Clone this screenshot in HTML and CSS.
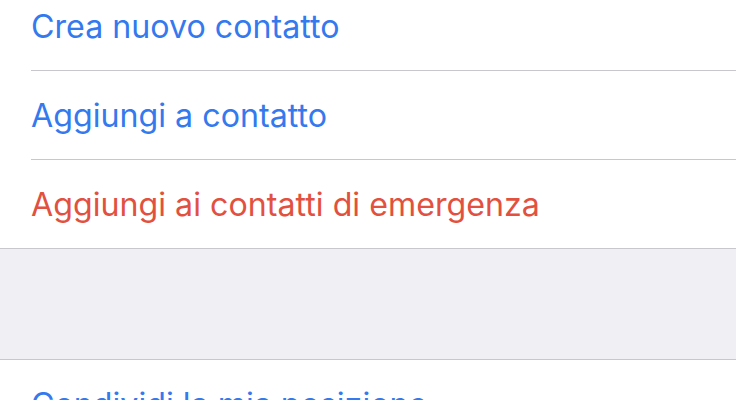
FILE: index.html
```html
<!DOCTYPE html>
<html lang="it">
<head>
<meta charset="utf-8">
<link rel="stylesheet" href="styles.css">
</head>
<body>
<div class="page">
  <ul class="group group-first">
    <li class="row"><span class="label blue">Crea nuovo contatto</span></li>
    <li class="row"><span class="label blue">Aggiungi a contatto</span></li>
    <li class="row"><span class="label red">Aggiungi ai contatti di emergenza</span></li>
  </ul>
  <div class="gap"></div>
  <ul class="group">
    <li class="row"><span class="label blue">Condividi la mia posizione</span></li>
  </ul>
</div>
</body>
</html>
```

FILE: styles.css
```css
html, body {
  margin: 0;
  padding: 0;
  background: #ffffff;
  overflow: hidden;
}
.page {
  width: 736px;
  height: 400px;
  overflow: hidden;
  font-family: "Inter", "Roboto", "Liberation Sans", sans-serif;
}
.group {
  list-style: none;
  margin: 0;
  padding: 0 0 0 31px;
  background: #ffffff;
  border-top: 1px solid #c8c7cc;
  border-bottom: 1px solid #c8c7cc;
}
.group-first {
  margin-top: -18px;
  border-top: none;
}
.row {
  height: 88px;
  display: flex;
  align-items: center;
  border-bottom: 1px solid #c8c7cc;
}
.row:last-child {
  border-bottom: none;
}
.label {
  font-size: 32.2px;
  letter-spacing: 0;
  white-space: nowrap;
}
.blue { color: #3479ee; }
.red { color: #e2513f; }
.gap {
  height: 110px;
  background: #efeff4;
}
```
